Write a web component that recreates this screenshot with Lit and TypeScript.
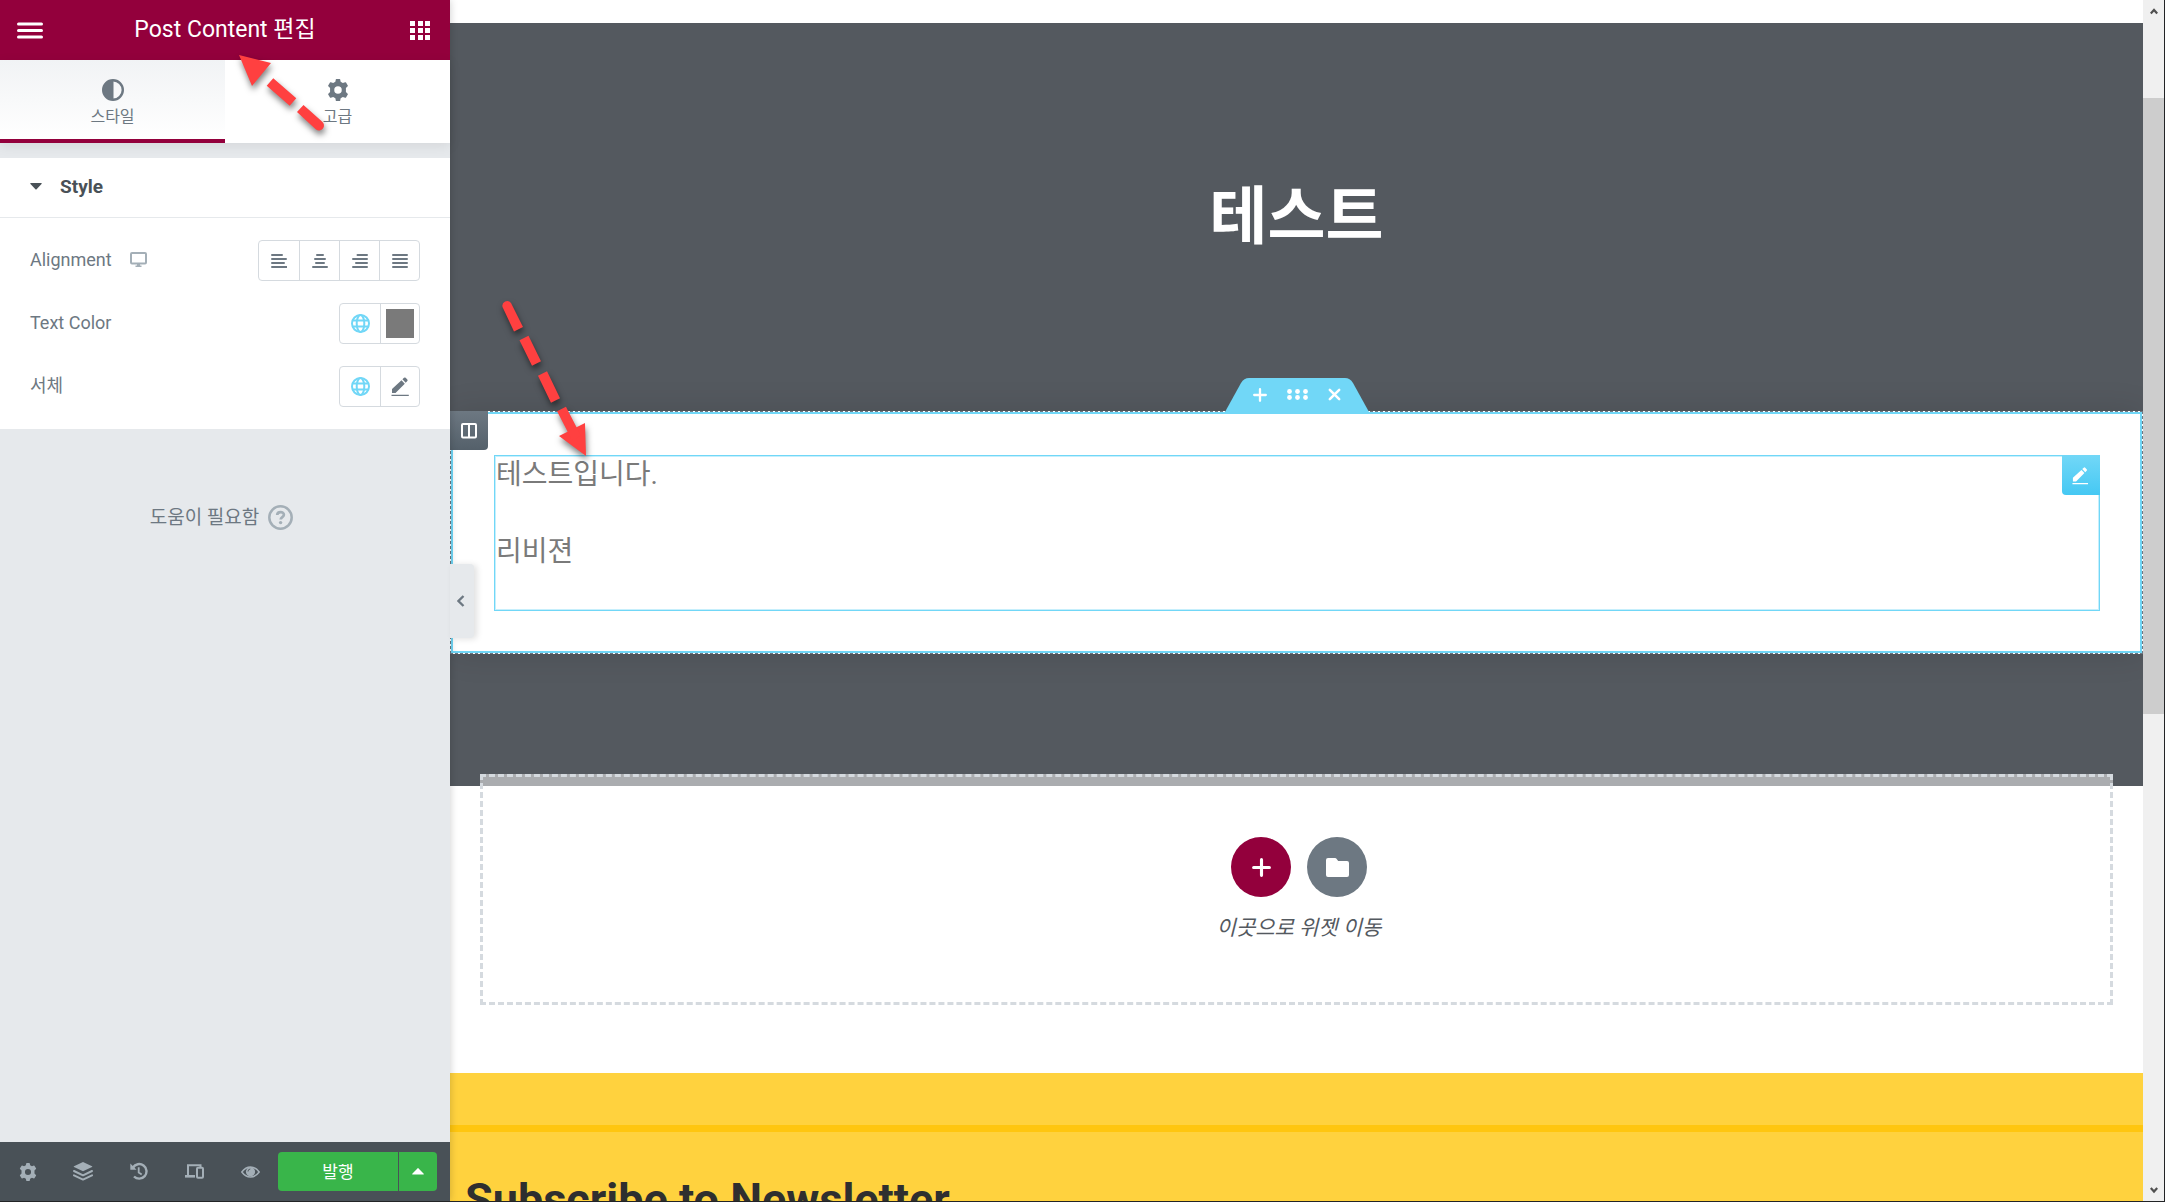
import { LitElement, html, css, svg, TemplateResult } from "lit";
import { customElement, state } from "lit/decorators.js";

const shapes: Record<string, TemplateResult> = {
  menu: svg`<path d="M1.500 3h23M1.500 9.500h23M1.500 16h23" stroke="currentColor" stroke-width="3" stroke-linecap="round"/>`,
  grid: svg`<path d="M0 0h5v5H0zM8 0h5v5H8zM15 0h5v5h-5zM0 7h5v5H0zM8 7h5v5H8zM15 7h5v5h-5zM0 14h5v5H0zM8 14h5v5H8zM15 14h5v5h-5z" fill="currentColor"/>`,
  contrast: svg`<circle cx="11" cy="11" r="9.800" fill="none" stroke="currentColor" stroke-width="2.400"/><path d="M11.500 1v20H11a10 10 0 0 1 0-20z" fill="currentColor"/>`,
  gear: svg`<path fill-rule="evenodd" fill="currentColor" d="M8 .5Q8 0 8.500 0h3q.5 0 .5.500l.4 2.100 2 1.100 2.100-.8q.5-.2.800.3l1.600 2.700q.3.500-.1.800L17.200 8.200v3.600l1.600 1.500q.4.300.1.800l-1.600 2.700q-.3.500-.8.300l-2.100-.8-2 1.100-.4 2.100q0 .5-.5.500h-3q-.5 0-.5-.5l-.4-2.100-2-1.100-2.100.8q-.5.200-.8-.3L1.100 14.100q-.3-.5.1-.8l1.600-1.500V8.200L1.200 6.700q-.4-.3-.1-.8l1.600-2.700q.3-.5.800-.3l2.100.8 2-1.100zM10 6.600a3.400 3.400 0 1 0 0 6.800 3.400 3.400 0 0 0 0-6.800z"/>`,
  caretDown: svg`<path d="M.8 0h10.400q1 0 .3.900L6.600 6.200q-.6.600-1.200 0L.5.900Q-.2 0 .8 0z" fill="currentColor"/>`,
  caretUp: svg`<path d="M.8 6.500h10.400q1 0 .3-.9L6.600.4Q6-.2 5.400.4L.5 5.600q-.7.900.3.900z" fill="currentColor"/>`,
  desktop: svg`<rect x="1" y="1" width="15" height="10.500" rx="1" fill="none" stroke="currentColor" stroke-width="2"/><path d="M7 11.500h3v2h1.500V15h-6v-1.500H7z" fill="currentColor"/>`,
  left: svg`<path d="M1 1h10M1 5h14M1 9h12M1 13h14.500" stroke="currentColor" stroke-width="2" stroke-linecap="round"/>`,
  center: svg`<path d="M5 1h6M3 5h10M4 9h8M1 13h14" stroke="currentColor" stroke-width="2" stroke-linecap="round"/>`,
  right: svg`<path d="M5.500 1H15M1 5h14M4 9h11M1 13h14" stroke="currentColor" stroke-width="2" stroke-linecap="round"/>`,
  justify: svg`<path d="M1 1h14M1 5h14M1 9h14M1 13h14" stroke="currentColor" stroke-width="2" stroke-linecap="round"/>`,
  globe: svg`<g fill="none" stroke="currentColor" stroke-width="2"><circle cx="9.500" cy="9.500" r="8.500"/><ellipse cx="9.500" cy="9.500" rx="3.800" ry="8.500"/><path d="M1.500 6.500h16M1.500 12.500h16"/></g>`,
  pencil: svg`<path d="M1 16v-4L10.500 3.200l3.300 3.500L4.500 16zM11.400 2.300 13 .8q.8-.8 1.700 0l1.600 1.600q.8.900 0 1.700l-1.600 1.600zM.5 17.800h17.300v1.300H.5z" fill="currentColor"/>`,
  help: svg`<circle cx="12.500" cy="12.500" r="11.200" fill="none" stroke="currentColor" stroke-width="2.500"/><path d="M9.200 10c.1-4 6.800-3.800 6.700-.2 0 2.300-3.200 2.300-3.200 4.700" fill="none" stroke="currentColor" stroke-width="2.700"/><circle cx="12.600" cy="17.600" r="1.700" fill="currentColor"/>`,
  layers: svg`<path d="M10 0 19 4.200q.8.400 0 .8L10 9.300 1 5Q.2 4.600 1 4.200z" fill="currentColor"/><path d="M1 9l9 4.300L19 9M1 13.300l9 4.300 9-4.300" fill="none" stroke="currentColor" stroke-width="2" stroke-linecap="round" stroke-linejoin="round"/>`,
  history: svg`<path d="M3 5.500A7.300 7.300 0 1 1 4 14.500" fill="none" stroke="currentColor" stroke-width="2.400"/><path d="M8.700 5.200v5.300l3 2" fill="none" stroke="currentColor" stroke-width="1.800"/><path d="M.3 1.500v6.300h6.300z" fill="currentColor"/>`,
  responsive: svg`<path d="M3 11.500V1.300h12.500V3" fill="none" stroke="currentColor" stroke-width="2"/><path d="M0 11h10v2.600H0z" fill="currentColor"/><rect x="12" y="3.700" width="6" height="10" rx="1" fill="none" stroke="currentColor" stroke-width="2"/>`,
  eye: svg`<path d="M.8 6Q4.500 1 9.500 1T18.200 6Q14.500 11 9.500 11T.8 6z" fill="none" stroke="currentColor" stroke-width="1.500"/><circle cx="9.500" cy="5.700" r="4.600" fill="currentColor"/><path d="M7 5.500Q7 3.200 9.300 3" fill="none" stroke="#495157" stroke-width=".9"/>`,
  chevronLeft: svg`<path d="M6.500 1 1.500 6l5 5" fill="none" stroke="currentColor" stroke-width="2.300"/>`,
  chevronUp: svg`<path d="M.8 5.500 4 2l3.200 3.500" fill="none" stroke="currentColor" stroke-width="2.200"/>`,
  chevronDown: svg`<path d="M.8 1 4 4.500 7.200 1" fill="none" stroke="currentColor" stroke-width="2.200"/>`,
  plus: svg`<path d="M7 1.200v11.600M1.200 7h11.600" stroke="currentColor" stroke-width="2.300" stroke-linecap="round"/>`,
  close: svg`<path d="M1.800 1.800l9.400 9.400M11.200 1.800l-9.400 9.400" stroke="currentColor" stroke-width="2.500" stroke-linecap="round"/>`,
  dots: svg`<g fill="currentColor"><circle cx="2.500" cy="2.500" r="2.400"/><circle cx="10.500" cy="2.500" r="2.400"/><circle cx="18.500" cy="2.500" r="2.400"/><circle cx="2.500" cy="8.500" r="2.400"/><circle cx="10.500" cy="8.500" r="2.400"/><circle cx="18.500" cy="8.500" r="2.400"/></g>`,
  column: svg`<rect x="1" y="1" width="14" height="13.500" rx="1" fill="none" stroke="currentColor" stroke-width="2"/><path d="M8 1v13" stroke="currentColor" stroke-width="2"/>`,
  folder: svg`<path d="M2 0h7q1 0 1.500.8L12.200 3H21q2 0 2 2v12q0 2-2 2H2q-2 0-2-2V2Q0 0 2 0z" fill="currentColor"/>`,
};

const icon = (name: string, w: number, h: number) =>
  html`<svg class="icon" width=${w} height=${h} viewBox="0 0 ${w} ${h}" aria-hidden="true">${shapes[name]}</svg>`;

const scaled = (name: string, size: number, box: number) =>
  html`<svg class="icon" width=${size} height=${size} viewBox="0 0 ${box} ${box}" aria-hidden="true">${shapes[name]}</svg>`;

const base = css`
  * { box-sizing: border-box; }
  h1, h2, p { margin: 0; }
  button {
    display: flex; align-items: center; justify-content: center;
    margin: 0; padding: 0; border: 0; background: none; color: inherit; font: inherit; cursor: pointer;
  }
  .icon { display: block; flex: none; }
`;

@customElement("editor-panel")
class EditorPanel extends LitElement {
  static styles = [base, css`
    :host {
      display: flex; flex-direction: column; position: relative; z-index: 2;
      background: #e6e9ec; color: #6d7882; font-size: 18px; line-height: 24px;
      box-shadow: 0 0 8px rgba(0, 0, 0, .2);
    }
    .header {
      display: grid; grid-template-columns: 26px 1fr 26px; align-items: center;
      height: 60px; padding: 0 17px; background: #93003c; color: #fff;
    }
    .header h1 { font-size: 23px; line-height: 28px; font-weight: 400; text-align: center; }
    .tabs {
      display: grid; grid-template-columns: 1fr 1fr; height: 83px; background: #fff;
      box-shadow: 0 3px 12px rgba(0, 0, 0, .08);
    }
    .tab {
      flex-direction: column; gap: 4px; padding-top: 9px;
      border-bottom: 4px solid transparent; font-size: 16px;
    }
    .tab.active { border-color: #93003c; background: linear-gradient(#f1f3f5, #fff); }
    .section { margin-top: 15px; background: #fff; }
    .toggle {
      width: 100%; height: 60px; justify-content: flex-start; gap: 18px; padding: 0 30px 2px;
      border-bottom: 1px solid #e6e9ec; color: #495157; font-size: 19px; font-weight: 700;
    }
    .controls { display: flex; flex-direction: column; gap: 22px; padding: 22px 30px; }
    .row { display: flex; align-items: center; justify-content: space-between; height: 41px; }
    .label { display: flex; align-items: center; gap: 18px; padding-bottom: 2px; }
    .label button { color: #a4afb7; }
    .group { display: flex; border: 1px solid #d5dadf; border-radius: 4px; }
    .group button { width: 40px; height: 39px; }
    .group button + button { border-left: 1px solid #d5dadf; }
    .globe { color: #71d7f7; }
    .pair button + button { width: 39px; }
    .swatch { width: 28px; height: 29px; background: #7a7a7a; }
    .help {
      display: flex; align-items: center; justify-content: center; gap: 9px;
      margin: 76px 7px 0 0; color: #6d7882; font-size: 19px; text-decoration: none;
    }
    .help .icon { color: #a4afb7; }
    .footer { display: flex; align-items: center; height: 59px; margin-top: auto; padding-right: 13px; background: #495157; }
    .tools { display: flex; flex: 1; color: #a4afb7; }
    .tools button { flex: 1; height: 40px; }
    .publish { display: flex; gap: 1px; color: #fff; font-size: 17px; }
    .publish button { width: 120px; height: 39px; background: #39b54a; border-radius: 4px 0 0 4px; }
    .publish .more { width: 38px; border-radius: 0 4px 4px 0; }
    .collapse {
      position: absolute; left: 100%; top: 564px; width: 24px; height: 74px; padding-right: 2px;
      background: #e6e9ec; border-radius: 0 4px 4px 0; box-shadow: 3px 1px 6px rgba(0, 0, 0, .12);
    }
  `];

  @state() private tab = 0;

  render() {
    const tabs: [string, TemplateResult][] = [["스타일", icon("contrast", 22, 22)], ["고급", scaled("gear", 22, 20)]];
    return html`
      <header class="header">
        <button aria-label="메뉴">${icon("menu", 26, 19)}</button>
        <h1>Post Content 편집</h1>
        <button aria-label="위젯">${icon("grid", 20, 19)}</button>
      </header>
      <nav class="tabs">
        ${tabs.map(([name, glyph], i) => html`
          <button class="tab ${this.tab === i ? "active" : ""}" @click=${() => (this.tab = i)}>${glyph}<span>${name}</span></button>`)}
      </nav>
      <section class="section">
        <button class="toggle" aria-expanded="true">${icon("caretDown", 12, 7)}<span>Style</span></button>
        <div class="controls">
          <div class="row">
            <div class="label"><span id="align">Alignment</span><button aria-label="데스크톱">${icon("desktop", 17, 15)}</button></div>
            <div class="group" role="group" aria-labelledby="align">
              ${["left", "center", "right", "justify"].map((a) => html`<button aria-label=${a}>${icon(a, 16, 14)}</button>`)}
            </div>
          </div>
          <div class="row">
            <div class="label"><span id="color">Text Color</span></div>
            <div class="group pair" role="group" aria-labelledby="color">
              <button class="globe" aria-label="전역 색상">${icon("globe", 19, 19)}</button>
              <button aria-label="색상 선택"><span class="swatch"></span></button>
            </div>
          </div>
          <div class="row">
            <div class="label"><span id="type">서체</span></div>
            <div class="group pair" role="group" aria-labelledby="type">
              <button class="globe" aria-label="전역 글꼴">${icon("globe", 19, 19)}</button>
              <button aria-label="서체 편집">${icon("pencil", 18, 20)}</button>
            </div>
          </div>
        </div>
      </section>
      <a class="help" href="#help"><span>도움이 필요함</span>${icon("help", 25, 25)}</a>
      <footer class="footer">
        <div class="tools">
          <button aria-label="설정">${scaled("gear", 18, 20)}</button>
          <button aria-label="탐색기">${icon("layers", 20, 19)}</button>
          <button aria-label="기록">${icon("history", 18, 19)}</button>
          <button aria-label="반응형 모드">${icon("responsive", 19, 15)}</button>
          <button aria-label="미리보기">${icon("eye", 19, 12)}</button>
        </div>
        <div class="publish">
          <button>발행</button>
          <button class="more" aria-label="저장 옵션">${icon("caretUp", 12, 7)}</button>
        </div>
      </footer>
      <button class="collapse" aria-label="패널 숨기기">${icon("chevronLeft", 8, 12)}</button>
    `;
  }
}

@customElement("page-preview")
class PagePreview extends LitElement {
  static styles = [base, css`
    :host { display: block; min-width: 0; overflow: hidden; background: #fff; }
    .hero { margin-top: 23px; padding: 150px 0 132px; background: #54595f; }
    .title { height: 238px; color: #fff; font-size: 63px; line-height: 88px; font-weight: 700; text-align: center; }
    .selected {
      position: relative; height: 243px; padding: 43px 42px 42px 43px; background: #fff;
      border: 1px dashed #6d7882; box-shadow: 0 0 30px rgba(0, 0, 0, .12);
    }
    .selected::before { content: ""; position: absolute; inset: 0; border: 2px solid #71d7f7; pointer-events: none; }
    .handle { position: absolute; left: 50%; bottom: 100%; width: 144px; height: 34px; margin-left: -72px; color: #fff; }
    .handle .shape { position: absolute; inset: 0; color: #71d7f7; }
    .actions { position: relative; display: flex; align-items: center; justify-content: center; gap: 20px; height: 33px; }
    .column {
      position: absolute; left: -1px; top: -1px; width: 38px; height: 39px; color: #fff;
      background: linear-gradient(#6d7882, #54606a); border-radius: 0 0 4px 0;
    }
    .widget {
      position: relative; height: 156px; padding: 0 1px; border: 1px solid #71d7f7;
      box-shadow: inset 0 0 0 1px rgba(113, 215, 247, .4);
      color: #7a7a7a; font-size: 28px; line-height: 38px;
    }
    .widget p + p { margin-top: 39px; }
    .edit {
      position: absolute; right: -1px; top: 0; width: 38px; height: 39px; color: #fff;
      background: linear-gradient(#71d7f7, #45c8f3); border-radius: 0 0 0 4px;
    }
    .drop {
      position: relative; display: flex; flex-direction: column; align-items: center; gap: 13px;
      height: 231px; margin: -12px 30px 68px; padding: 60px 0 0 5px;
      background: rgba(255, 255, 255, .5); border: 3px dashed #d5dadf;
      color: #54595f; font-size: 21px; line-height: 36px; font-style: italic;
    }
    .circles { display: flex; gap: 16px; }
    .circles button { width: 60px; height: 60px; border-radius: 50%; background: #6d7882; color: #fff; }
    .circles .add { background: #93003c; }
    .news { height: 140px; background: #ffd23e; }
    .news hr { height: 7px; margin: 0; border: 0; background: #ffc60f; }
    .lead { height: 52px; }
    .news h2 { padding: 42px 15px 0; color: #2f2f2f; font-size: 45px; line-height: 52px; font-weight: 700; white-space: nowrap; }
  `];

  render() {
    return html`
      <section class="hero">
        <h1 class="title">테스트</h1>
        <div class="selected">
          <div class="handle">
            <svg class="shape" width="144" height="34" viewBox="0 0 144 34" aria-hidden="true">
              <path d="M0 34 16 5Q19 0 24 0h96q5 0 8 5l16 29z" fill="currentColor"/>
            </svg>
            <div class="actions">
              <button aria-label="섹션 추가">${icon("plus", 14, 14)}</button>
              <button aria-label="섹션 편집">${icon("dots", 21, 11)}</button>
              <button aria-label="섹션 삭제">${icon("close", 13, 13)}</button>
            </div>
          </div>
          <button class="column" aria-label="열 편집">${icon("column", 16, 16)}</button>
          <div class="widget">
            <p>테스트입니다.</p>
            <p>리비젼</p>
            <button class="edit" aria-label="위젯 편집">${scaled("pencil", 18, 20)}</button>
          </div>
        </div>
      </section>
      <section class="drop">
        <div class="circles">
          <button class="add" aria-label="새 섹션 추가">
            <svg class="icon" width="19" height="19" viewBox="0 0 14 14" aria-hidden="true">${shapes.plus}</svg>
          </button>
          <button aria-label="템플릿 추가">${icon("folder", 23, 19)}</button>
        </div>
        <p>이곳으로 위젯 이동</p>
      </section>
      <section class="news">
        <div class="lead"></div>
        <hr>
        <h2>Subscribe to Newsletter</h2>
      </section>
    `;
  }
}

@customElement("app-root")
class AppRoot extends LitElement {
  static styles = [base, css`
    :host {
      position: relative; display: grid; grid-template-columns: 450px minmax(0, 1fr) 21px;
      height: 100vh; box-sizing: border-box; overflow: hidden;
      border: solid #222426; border-width: 0 1px 1px 0;
      font-family: Roboto, "Noto Sans CJK KR", sans-serif;
    }
    .scroll {
      display: flex; flex-direction: column; min-height: 0; background: #f0f0f0; color: #505050;
    }
    .scroll button { height: 22px; flex: none; }
    .track { flex: 1; display: flex; flex-direction: column; padding-top: 76px; }
    .thumb { flex: 0 0 57%; background: #cdcdcd; }
    .arrows {
      position: absolute; left: 0; top: 0; z-index: 5; pointer-events: none;
      filter: drop-shadow(1px 4px 3px rgba(0, 0, 0, .5));
    }
  `];

  render() {
    return html`
      <editor-panel></editor-panel>
      <page-preview></page-preview>
      <div class="scroll">
        <button aria-label="위로">${icon("chevronUp", 8, 7)}</button>
        <div class="track"><div class="thumb"></div></div>
        <button aria-label="아래로">${icon("chevronDown", 8, 7)}</button>
      </div>
      <svg class="arrows" width="620" height="480" viewBox="0 0 620 480" aria-hidden="true">
        <g fill="#ff4040">
          <path d="M239 55l32 8-19 23zM586 456l-27-20 26-13z"/>
          <path d="M322 121.500a4.900 4.900 0 0 1-6 8L297 112l6.500-7z"/>
          <path d="M502.500 307a4.800 4.800 0 0 1 8.500-4l12 24-9 4.500z"/>
        </g>
        <path d="M270 82l23 20M524 338l12.500 25.500M542.500 373.500l13 27M561.500 409l15 29" stroke="#ff4040" stroke-width="10"/>
      </svg>
    `;
  }
}
